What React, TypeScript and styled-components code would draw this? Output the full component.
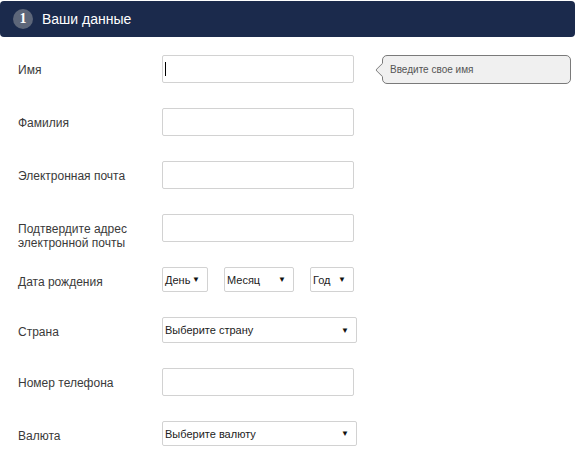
import React from "react";
import styled, { createGlobalStyle } from "styled-components";

const Global = createGlobalStyle`
  html, body { margin: 0; padding: 0; background: #ffffff; }
  body { font-family: "Liberation Sans", Arial, sans-serif; }
  * { box-sizing: border-box; }
`;

const Page = styled.div`
  width: 577px;
  padding-top: 1px;
`;

const Header = styled.div`
  width: 575px;
  height: 36px;
  background: #1b2a4c;
  border-radius: 4px;
  display: flex;
  align-items: center;
  padding-left: 13px;
  gap: 9px;
`;

const Badge = styled.div`
  width: 20px;
  height: 20px;
  border-radius: 50%;
  background: #5d6679;
  color: #fff;
  font-weight: bold;
  font-size: 14px;
  display: flex;
  align-items: center;
  justify-content: center;
  font-family: "Liberation Serif", serif;
`;

const Title = styled.div`
  color: #fff;
  font-size: 14px;
`;

const Form = styled.div`
  display: flex;
  flex-direction: column;
  gap: 25px;
  padding: 18px 0 0 18px;
`;

const Row = styled.div`
  position: relative;
  display: flex;
  align-items: flex-start;
`;

const Label = styled.div`
  width: 144px;
  height: 14px;
  padding-top: 8px;
  font-size: 12px;
  line-height: 14px;
  color: #3a3a3a;
  box-sizing: content-box;
`;

const TextBox = styled.div`
  width: 192px;
  height: 28px;
  border: 1px solid #d2d2d2;
  border-radius: 2px;
  background: #fff;
  display: flex;
  align-items: center;
  padding-left: 2px;
`;

const Caret = styled.span`
  width: 1px;
  height: 14px;
  background: #000;
`;

const Selects = styled.div`
  display: flex;
  gap: 16px;
`;

const SelectBox = styled.div<{ $w: number; $h?: number }>`
  width: ${(p) => p.$w}px;
  height: ${(p) => p.$h ?? 25}px;
  border: 1px solid #d2d2d2;
  border-radius: 2px;
  background: #fff;
  display: flex;
  align-items: center;
  justify-content: space-between;
  padding: 0 7px 0 2px;
  font-size: 11px;
  color: #222;
`;

const Arrow = styled.span`
  font-size: 8px;
  color: #111;
`;

const Tooltip = styled.div`
  position: absolute;
  left: 364px;
  top: 0;
  width: 189px;
  height: 29px;
  background: #f0f0f0;
  border: 1px solid #7a7a7a;
  border-radius: 5px;
  display: flex;
  align-items: center;
  padding-left: 7px;
  font-size: 10px;
  color: #555;
  &::before {
    content: "";
    position: absolute;
    left: -6px;
    top: 9px;
    width: 9px;
    height: 9px;
    background: #f0f0f0;
    border-left: 1px solid #7a7a7a;
    border-bottom: 1px solid #7a7a7a;
    transform: rotate(45deg);
    border-radius: 0 0 0 2px;
  }
`;

const Select = ({ w, h, text }: { w: number; h?: number; text: string }) => (
  <SelectBox $w={w} $h={h}>
    <span>{text}</span>
    <Arrow>▼</Arrow>
  </SelectBox>
);

export default function App() {
  return (
    <Page>
      <Global />
      <Header>
        <Badge>1</Badge>
        <Title>Ваши данные</Title>
      </Header>
      <Form>
        <Row>
          <Label>Имя</Label>
          <TextBox>
            <Caret />
          </TextBox>
          <Tooltip>Введите свое имя</Tooltip>
        </Row>
        <Row>
          <Label>Фамилия</Label>
          <TextBox />
        </Row>
        <Row>
          <Label>Электронная почта</Label>
          <TextBox />
        </Row>
        <Row>
          <Label>
            Подтвердите адрес
            <br />
            электронной почты
          </Label>
          <TextBox />
        </Row>
        <Row>
          <Label>Дата рождения</Label>
          <Selects>
            <Select w={46} text="День" />
            <Select w={70} text="Месяц" />
            <Select w={44} text="Год" />
          </Selects>
        </Row>
        <Row>
          <Label>Страна</Label>
          <Select w={195} h={26} text="Выберите страну" />
        </Row>
        <Row>
          <Label>Номер телефона</Label>
          <TextBox />
        </Row>
        <Row>
          <Label>Валюта</Label>
          <Select w={195} text="Выберите валюту" />
        </Row>
      </Form>
    </Page>
  );
}
